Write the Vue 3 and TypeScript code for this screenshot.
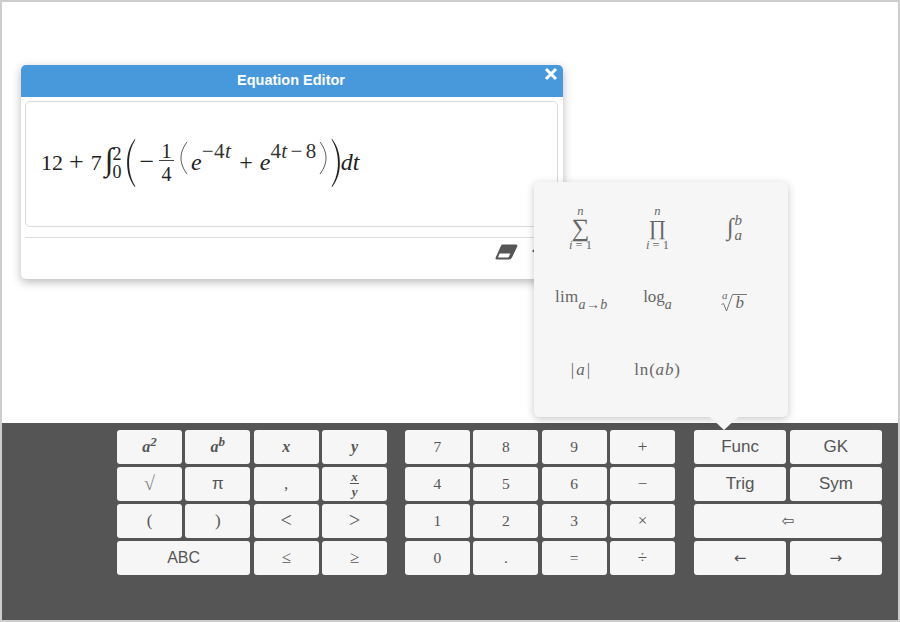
<script setup lang="ts">
interface Key {
  t: string
  sup?: string
  den?: string
  cls?: string
  span?: number
}
const group1: Key[] = [
  { t: 'a', sup: '2', cls: 'bi' }, { t: 'a', sup: 'b', cls: 'bi' }, { t: 'x', cls: 'bi' }, { t: 'y', cls: 'bi' },
  { t: '√', cls: 'root' }, { t: 'π', cls: 'pi' }, { t: ',', cls: 'serif' }, { t: 'x', den: 'y', cls: 'bi' },
  { t: '(', cls: 'serif' }, { t: ')', cls: 'serif' }, { t: '<', cls: 'serif big' }, { t: '>', cls: 'serif big' },
  { t: 'ABC', cls: 'sans', span: 2 }, { t: '≤', cls: 'serif' }, { t: '≥', cls: 'serif' }
]
const group2: Key[] = ['7', '8', '9', '+', '4', '5', '6', '−', '1', '2', '3', '×', '0', '.', '=', '÷'].map((t, i) => ({
  t,
  cls: i % 4 === 3 ? 'kop' : 'digit'
}))
const group3: Key[] = [
  { t: 'Func', cls: 'sans lg' }, { t: 'GK', cls: 'sans lg' },
  { t: 'Trig', cls: 'sans lg' }, { t: 'Sym', cls: 'sans lg' },
  { t: '⇦', cls: 'arrow', span: 2 },
  { t: '←', cls: 'arrow' }, { t: '→', cls: 'arrow' }
]
const groups = [
  { name: 'g1', keys: group1, cols: 4 },
  { name: 'g2', keys: group2, cols: 4 },
  { name: 'g3', keys: group3, cols: 2 }
]
</script>

<template>
  <div class="page">
    <main class="workspace">
      <section class="dialog">
        <header class="dialog-head">
          <span>Equation Editor</span>
          <svg class="close" width="14" height="14" viewBox="0 0 14 14">
            <path d="M2 2 L12 12 M12 2 L2 12" stroke="#fff" stroke-width="3" fill="none" />
          </svg>
        </header>
        <div class="editor">
          <div class="eq">
            <span>12</span><span class="op">+</span><span>7</span><span class="int">∫</span>
            <span class="limits"><span>2</span><span>0</span></span>
            <svg class="bigp lp" width="10" height="50" viewBox="0 0 10 52">
              <path d="M9 1 C3 9 1 17 1 26 C1 35 3 43 9 51 L9.6 50.4 C5 43 3 35 3 26 C3 17 5 9 9.6 1.6 Z" fill="#222" />
            </svg>
            <span class="minus">−</span>
            <span class="frac"><span class="num">1</span><span class="den">4</span></span>
            <svg class="midp lm" width="8" height="34" viewBox="0 0 8 36" preserveAspectRatio="none">
              <path d="M7 1 C3 7 1 12 1 18 C1 24 3 29 7 35" stroke="#444" stroke-width="0.9" fill="none" />
            </svg>
            <i class="var e1">e</i><span class="sup s1">−4<i>t</i></span>
            <span class="op o2">+</span>
            <i class="var">e</i><span class="sup s2">4<i>t</i><span class="m2">−</span>8</span>
            <svg class="midp rm" width="8" height="34" viewBox="0 0 8 36" preserveAspectRatio="none">
              <path d="M1 1 C5 7 7 12 7 18 C7 24 5 29 1 35" stroke="#444" stroke-width="0.9" fill="none" />
            </svg>
            <svg class="bigp rp" width="10" height="50" viewBox="0 0 10 52">
              <path d="M1 1 C7 9 9 17 9 26 C9 35 7 43 1 51 L.4 50.4 C5 43 7 35 7 26 C7 17 5 9 .4 1.6 Z" fill="#222" />
            </svg>
            <i class="var dt">dt</i>
          </div>
        </div>
        <div class="toolbar">
          <svg width="23" height="16" viewBox="0 0 23 16">
            <path d="M7.5 .5 H21 Q23 .5 22.2 2.5 L17 13.5 Q16 15.5 14 15.5 H2 Q-.2 15.5 .8 13.2 L6 1.8 Q6.5 .5 7.5 .5 Z" fill="#555" />
            <path d="M4.6 9.5 H15.4 L13.4 13.4 H3 Z" fill="#fff" />
          </svg>
          <svg width="16" height="14" viewBox="0 0 16 14">
            <path d="M0 7 L5 3 V11 Z M4 6 H14 V8 H4 Z" fill="#555" />
          </svg>
        </div>
      </section>
    </main>

    <aside class="popover">
      <div class="fn">
        <span class="big-op">
          <i class="lim-t">n</i><span class="glyph">∑</span><span class="lim-b"><i>i</i> = 1</span>
        </span>
      </div>
      <div class="fn">
        <span class="big-op">
          <i class="lim-t">n</i><span class="glyph prod">∏</span><span class="lim-b"><i>i</i> = 1</span>
        </span>
      </div>
      <div class="fn">
        <span class="int-small">∫</span><span class="limits small"><i>b</i><i>a</i></span>
      </div>
      <div class="fn lim"><span>lim<sub><i>a</i>→<i>b</i></sub></span></div>
      <div class="fn log"><span>log<sub><i>a</i></sub></span></div>
      <div class="fn rad">
        <i class="rad-a">a</i>
        <svg width="12" height="18" viewBox="0 0 12 18">
          <path d="M.5 10.5 L2.5 9.5 L5.5 17 L11.5 .5 H12" stroke="#777" stroke-width="1" fill="none" />
        </svg>
        <span class="radicand"><i>b</i></span>
      </div>
      <div class="fn abs"><span>|<i>a</i>|</span></div>
      <div class="fn ln"><span>ln(<i>ab</i>)</span></div>
      <span class="tip"></span>
    </aside>

    <footer class="keyboard">
      <div v-for="g in groups" :key="g.name" class="group" :class="g.name">
        <button
          v-for="(k, i) in g.keys"
          :key="i"
          type="button"
          class="key"
          :class="[k.cls, { wide: k.span === 2 }]"
        >
          <span v-if="k.den" class="kfrac"><span class="ktop">{{ k.t }}</span><span>{{ k.den }}</span></span>
          <span v-else>{{ k.t }}<sup v-if="k.sup">{{ k.sup }}</sup></span>
        </button>
      </div>
    </footer>
  </div>
</template>

<style>
html, body { margin: 0; background: #fff; }
</style>

<style scoped>
.page {
  position: relative;
  width: 900px;
  height: 622px;
  box-sizing: border-box;
  border: 2px solid #cdcdcd;
  display: flex;
  flex-direction: column;
  overflow: hidden;
  font-family: "Liberation Sans", Arial, sans-serif;
  background: #fff;
}
.workspace {
  height: 421px;
  flex: none;
  padding: 63px 0 0 19px;
  box-sizing: border-box;
}
.dialog {
  width: 542px;
  height: 214px;
  border-radius: 5px;
  background: #fff;
  box-shadow: 0 3px 10px rgba(0, 0, 0, 0.28);
  display: flex;
  flex-direction: column;
}
.dialog-head {
  position: relative;
  height: 32px;
  flex: none;
  background: #4899dc;
  border-radius: 5px 5px 0 0;
  color: #fff;
  font-weight: bold;
  font-size: 14.5px;
  line-height: 31px;
  text-align: center;
  padding-right: 2px;
}
.close { position: absolute; right: 5px; top: 2px; }
.editor {
  margin: 4px 5px 0 4px;
  height: 126px;
  flex: none;
  box-sizing: border-box;
  border: 1px solid #d9d9d9;
  border-radius: 5px;
  padding: 0 0 4px 15px;
  display: flex;
  align-items: center;
}
.eq {
  font-family: "Liberation Serif", "Times New Roman", serif;
  font-size: 22px;
  color: #222;
  white-space: nowrap;
  line-height: 60px;
}
.op { font-size: 26px; margin: 0 7px 0 6px; }
.int { font-size: 32px; line-height: 0; margin-left: 3px; }
.limits {
  display: inline-flex;
  flex-direction: column;
  font-size: 18px;
  line-height: 18px;
  vertical-align: 10px;
  margin-left: -1px;
}
.bigp { vertical-align: -18px; }
.lp { margin-left: 5px; }
.rp { margin-left: 4px; }
.minus { font-size: 26px; margin-left: 3px; }
.frac {
  display: inline-flex;
  flex-direction: column;
  align-items: center;
  vertical-align: 12px;
  margin-left: 5px;
  width: 15px;
  font-size: 20px;
}
.num { border-bottom: 1px solid #444; width: 100%; text-align: center; line-height: 16px; padding-bottom: 1px; }
.den { line-height: 26px; }
.midp { vertical-align: -5px; }
.lm { margin-left: 6px; }
.rm { margin-left: 2px; }
.var { font-size: 24px; }
.e1 { margin-left: 3px; }
.sup { font-size: 21px; vertical-align: 12px; line-height: 0; color: #333; letter-spacing: 0.4px; }
.m2 { margin: 0 3px; }
.o2 { font-size: 24px; margin: 0 7px 0 8px; }
.dt { margin-left: 0; }

.toolbar {
  margin: 10px 5px 0 4px;
  border-top: 1px solid #ddd;
  padding: 6px 0 0 470px;
  display: flex;
  align-items: flex-start;
  gap: 14px;
}

.popover {
  position: absolute;
  left: 532px;
  top: 180px;
  width: 254px;
  height: 235px;
  box-sizing: border-box;
  padding: 10px 8px 12px;
  background: #f6f6f6;
  border-radius: 5px;
  box-shadow: 0 2px 8px rgba(0, 0, 0, 0.22);
  display: grid;
  grid-template-columns: repeat(3, 77px);
  grid-template-rows: repeat(3, 71px);
  font-family: "Liberation Serif", "Times New Roman", serif;
  color: #666;
  font-size: 17px;
}
.fn {
  display: flex;
  align-items: center;
  justify-content: center;
  white-space: nowrap;
}
.big-op {
  display: flex;
  flex-direction: column;
  align-items: center;
}
.lim-t, .lim-b { font-size: 12.5px; line-height: 12px; }
.glyph { font-size: 25px; line-height: 22px; }
.glyph.prod { font-size: 21px; }
.int-small { font-size: 24px; }
.limits.small {
  font-size: 15px;
  line-height: 15px;
  vertical-align: baseline;
  margin-left: 1px;
}
.fn sub { font-size: 14px; vertical-align: -7px; line-height: 0; }
.lim { justify-content: flex-start; margin: 0 0 4px 13px; letter-spacing: 0.3px; }
.log { margin-bottom: 4px; }
.rad { margin-top: 8px; }
.rad-a { font-size: 11px; line-height: 11px; margin: -15px -7px 0 0; }
.radicand { border-top: 1px solid #777; line-height: 15px; padding: 0 3px; font-size: 17px; margin-bottom: 1px; align-self: center; }
.abs i { margin: 0 2px; }
.ln { letter-spacing: 0.8px; }
.tip {
  position: absolute;
  left: 176px;
  bottom: -13px;
  width: 0;
  height: 0;
  border-left: 14px solid transparent;
  border-right: 14px solid transparent;
  border-top: 13px solid #f6f6f6;
}

.keyboard {
  flex: 1;
  background: #555;
  padding: 7px 0 0 115px;
  display: flex;
  align-items: flex-start;
  gap: 18px;
}
.group {
  display: grid;
  grid-template-rows: repeat(4, 33.5px);
  gap: 3.6px;
}
.g1, .g2 {
  width: 270px;
  grid-template-columns: repeat(4, 1fr);
  column-gap: 3.4px;
}
.g3 {
  width: 188px;
  margin-left: 1px;
  grid-template-columns: repeat(2, 1fr);
  column-gap: 3.6px;
}
.key {
  margin: 0;
  padding: 0;
  border: 0;
  border-radius: 3px;
  background: #f6f6f6;
  color: #555;
  font-family: "Liberation Serif", "Times New Roman", serif;
  font-size: 15px;
  display: flex;
  align-items: center;
  justify-content: center;
}
.wide { grid-column: span 2; }
.serif { font-size: 17px; }
.bi { font-style: italic; font-weight: bold; font-size: 16px; }
.bi sup { font-size: 13px; line-height: 0; vertical-align: 6px; }
.root { font-size: 20px; color: #888; }
.pi { font-family: "Liberation Sans", sans-serif; font-size: 17px; }
.big { font-size: 20px; }
.sans { font-family: "Liberation Sans", sans-serif; font-size: 16px; }
.lg { font-size: 17px; }
.digit { font-size: 15.5px; }
.kop { font-size: 17px; }
.arrow { font-size: 15px; font-family: "DejaVu Sans", sans-serif; }
.kfrac { display: flex; flex-direction: column; align-items: center; font-size: 13px; line-height: 13px; }
.ktop { border-bottom: 1px solid #555; padding: 0 1px; margin-bottom: 1px; }
</style>
